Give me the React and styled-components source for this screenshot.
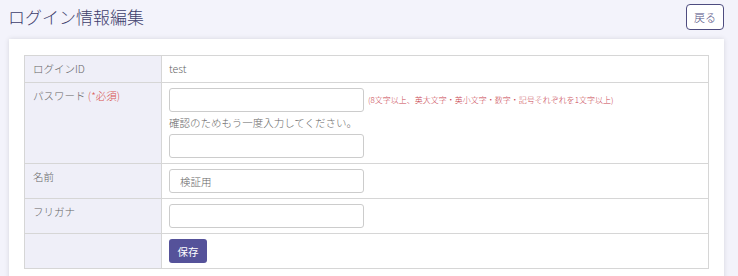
import styled, { createGlobalStyle } from "styled-components";

const GlobalStyle = createGlobalStyle`
    body {
        margin: 0;
        background: #f3f3fb;
        font-family: "Noto Sans CJK JP", "Noto Sans", sans-serif;
        font-weight: 300;
        color: #666;
    }
`;

export default function App() {
    return (
        <Page>
            <GlobalStyle />
            <Header>
                <Title>ログイン情報編集</Title>
                <BackButton>戻る</BackButton>
            </Header>
            <Card>
                <Table>
                    <Row>
                        <Label>ログインID</Label>
                        <Cell>test</Cell>
                    </Row>
                    <Row>
                        <Label>パスワード <Required>(*必須)</Required></Label>
                        <Cell>
                            <Line>
                                <Input type="password" />
                                <Hint>(8文字以上、英大文字・英小文字・数字・記号それぞれを1文字以上)</Hint>
                            </Line>
                            <Note>確認のためもう一度入力してください。</Note>
                            <Input type="password" />
                        </Cell>
                    </Row>
                    <Row>
                        <Label>名前</Label>
                        <Cell><Input defaultValue="検証用" /></Cell>
                    </Row>
                    <Row>
                        <Label>フリガナ</Label>
                        <Cell><Input /></Cell>
                    </Row>
                    <Row>
                        <Label></Label>
                        <Cell><SaveButton>保存</SaveButton></Cell>
                    </Row>
                </Table>
            </Card>
        </Page>
    );
}

const Page = styled.div`
    padding: 0 14px 0 9px;
`;

const Header = styled.header`
    display: flex;
    align-items: center;
    justify-content: space-between;
    height: 36px;
    margin-bottom: 3px;
`;

const Title = styled.h1`
    margin: 0 0 0 -1px;
    font-size: 17px;
    font-weight: 300;
    color: #3d3d6b;
    line-height: 1;
    padding-bottom: 3px;
`;

const BackButton = styled.button`
    height: 26px;
    width: 38px;
    padding: 0;
    background: #fff;
    border: 1px solid #4e4c80;
    border-radius: 4px;
    color: #4e4c80;
    font-family: inherit;
    font-weight: 300;
    font-size: 11px;
    margin-top: -2px;
`;

const Card = styled.div`
    background: #fff;
    box-shadow: 0 0 5px rgba(0, 0, 0, 0.12);
    padding: 16px 15px 15px 15px;
`;

const Table = styled.div`
    border: 1px solid #d6d6d6;
    border-bottom: none;
`;

const Row = styled.div`
    display: grid;
    grid-template-columns: 137px 1fr;
    border-bottom: 1px solid #d6d6d6;
`;

const Label = styled.div`
    background: #efeff8;
    border-right: 1px solid #d6d6d6;
    padding: 5px 8px;
    font-size: 10.5px;
    line-height: 16px;
`;

const Required = styled.span`
    color: #d9534f;
`;

const Cell = styled.div`
    padding: 5px 7px;
    font-size: 10.5px;
    line-height: 16px;
    display: flex;
    flex-direction: column;
    justify-content: center;
`;

const Line = styled.div`
    display: flex;
    align-items: center;
`;

const Input = styled.input`
    box-sizing: border-box;
    width: 195px;
    height: 24px;
    border: 1px solid #ccc;
    border-radius: 3px;
    padding: 0 10px;
    font-family: inherit;
    font-weight: 300;
    font-size: 10.5px;
    color: #666;
`;

const Hint = styled.span`
    margin-left: 4px;
    font-size: 8px;
    color: #c9444f;
`;

const Note = styled.div`
    margin: 4px 0;
    line-height: 14px;
`;

const SaveButton = styled.button`
    width: 38px;
    height: 24px;
    padding: 0;
    border: none;
    border-radius: 3px;
    background: #55529a;
    color: #fff;
    font-family: inherit;
    font-size: 10.5px;
`;
